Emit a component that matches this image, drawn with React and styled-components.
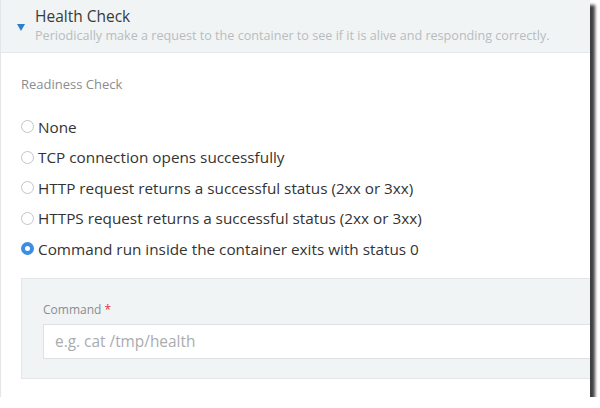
import React from "react";
import styled, { createGlobalStyle } from "styled-components";

const GlobalStyle = createGlobalStyle`
  body {
    margin: 0;
    background: #ffffff;
    font-family: "Open Sans", "Liberation Sans", sans-serif;
  }
`;

const Frame = styled.div`
  width: 589px;
  height: 397px;
  overflow: hidden;
  background: #ffffff;
  border-left: 1px solid #e4e7e9;
  box-shadow: 5px 5px 3px rgba(30, 30, 30, 0.85);
  display: flex;
  flex-direction: column;
`;

const Header = styled.div`
  display: flex;
  align-items: center;
  gap: 10px;
  height: 53px;
  flex-shrink: 0;
  padding-left: 16px;
  background: #f1f4f5;
  border-bottom: 1px solid #e4e8ea;
  box-sizing: border-box;
`;

const Caret = styled.span`
  width: 0;
  height: 0;
  margin-top: 2px;
  border-left: 4.5px solid transparent;
  border-right: 4.5px solid transparent;
  border-top: 7px solid #2b7fcc;
`;

const HeaderText = styled.div`
  display: flex;
  flex-direction: column;
  margin-top: -3px;
`;

const Title = styled.div`
  font-size: 15.5px;
  color: #3a3a3a;
`;

const Subtitle = styled.div`
  font-size: 12.6px;
  color: #b8bcbf;
`;

const Body = styled.div`
  display: flex;
  flex-direction: column;
  padding: 22px 0 0 20px;
`;

const SectionLabel = styled.div`
  font-size: 13px;
  color: #8a8d90;
  margin-bottom: 24px;
`;

const RadioList = styled.div`
  display: flex;
  flex-direction: column;
  gap: 11px;
`;

const RadioRow = styled.label`
  display: flex;
  align-items: center;
  gap: 4px;
  height: 19.5px;
  font-size: 15.3px;
  color: #333;
`;

const RadioCircle = styled.span`
  width: 13px;
  height: 13px;
  border-radius: 50%;
  box-sizing: border-box;
  border: ${(p) => (p.checked ? "4.5px solid #3a8ee6" : "1px solid #c2c5c8")};
  background: #ffffff;
  flex-shrink: 0;
`;

const CommandBox = styled.div`
  margin-top: 19px;
  margin-right: -40px;
  padding: 22px 20px 19px 21px;
  background: #f1f4f5;
  border: 1px solid #e2e6e8;
  display: flex;
  flex-direction: column;
  gap: 6px;
`;

const FieldLabel = styled.div`
  font-size: 12px;
  color: #8a8d90;
`;

const Required = styled.span`
  color: #e0333a;
`;

const Input = styled.input`
  height: 35px;
  box-sizing: border-box;
  border: 1px solid #dde1e3;
  background: #ffffff;
  padding: 0 11px;
  font-family: inherit;
  font-size: 15.4px;
  color: #333;
  outline: none;
  &::placeholder {
    color: #a9acaf;
  }
`;

const options = [
  "None",
  "TCP connection opens successfully",
  "HTTP request returns a successful status (2xx or 3xx)",
  "HTTPS request returns a successful status (2xx or 3xx)",
  "Command run inside the container exits with status 0",
];

const App = () => {
  return (
    <>
      <GlobalStyle />
      <Frame>
        <Header>
          <Caret />
          <HeaderText>
            <Title>Health Check</Title>
            <Subtitle>
              Periodically make a request to the container to see if it is alive and responding correctly.
            </Subtitle>
          </HeaderText>
        </Header>
        <Body>
          <SectionLabel>Readiness Check</SectionLabel>
          <RadioList>
            {options.map((o, i) => (
              <RadioRow key={o}>
                <RadioCircle checked={i === options.length - 1} />
                {o}
              </RadioRow>
            ))}
          </RadioList>
          <CommandBox>
            <FieldLabel>
              Command <Required>*</Required>
            </FieldLabel>
            <Input placeholder="e.g. cat /tmp/health" />
          </CommandBox>
        </Body>
      </Frame>
    </>
  );
};

export default App;
